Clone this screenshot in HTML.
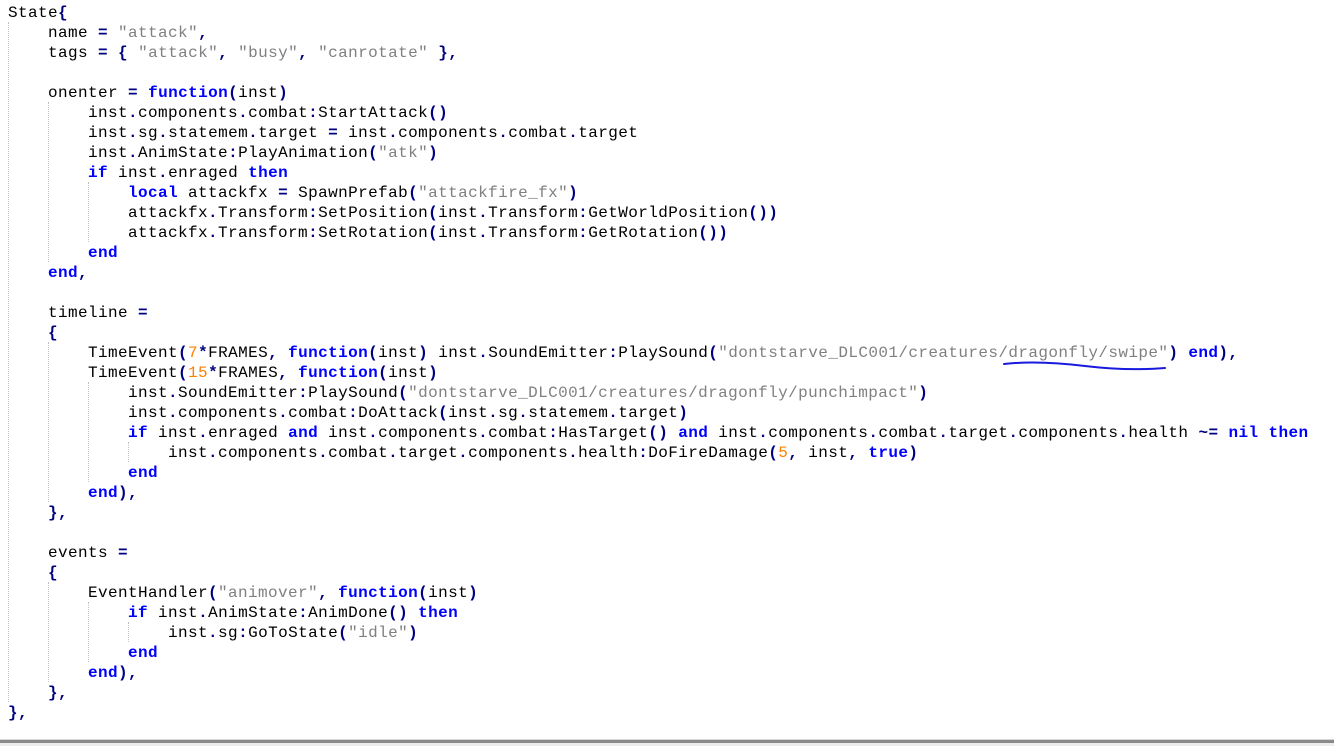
<!DOCTYPE html>
<html><head><meta charset="utf-8"><style>
html,body{margin:0;padding:0;background:#fff;width:1334px;height:746px;overflow:hidden;position:relative}
pre{position:absolute;left:8px;top:3px;margin:0;font-family:"Liberation Mono",monospace;font-size:16px;letter-spacing:0.4px;line-height:20px;color:#000}
.k{color:#0000ff;font-weight:bold}
.o{color:#000080;font-weight:bold}
.s{color:#808080}
.n{color:#ff8000}
.g{position:absolute;width:0;border-left:1px dotted #c0c0c0}
</style></head><body>
<div class="g" style="left:8px;top:22px;height:680px"></div>
<div class="g" style="left:48px;top:102px;height:160px"></div>
<div class="g" style="left:48px;top:342px;height:160px"></div>
<div class="g" style="left:48px;top:582px;height:100px"></div>
<div class="g" style="left:88px;top:182px;height:60px"></div>
<div class="g" style="left:88px;top:382px;height:100px"></div>
<div class="g" style="left:88px;top:602px;height:60px"></div>
<div class="g" style="left:128px;top:442px;height:20px"></div>
<div class="g" style="left:128px;top:622px;height:20px"></div>
<pre>State<span class="o">{</span>
    name <span class="o">=</span> <span class="s">"attack"</span><span class="o">,</span>
    tags <span class="o">=</span> <span class="o">{</span> <span class="s">"attack"</span><span class="o">,</span> <span class="s">"busy"</span><span class="o">,</span> <span class="s">"canrotate"</span> <span class="o">},</span>

    onenter <span class="o">=</span> <span class="k">function</span><span class="o">(</span>inst<span class="o">)</span>
        inst<span class="o">.</span>components<span class="o">.</span>combat<span class="o">:</span>StartAttack<span class="o">()</span>
        inst<span class="o">.</span>sg<span class="o">.</span>statemem<span class="o">.</span>target <span class="o">=</span> inst<span class="o">.</span>components<span class="o">.</span>combat<span class="o">.</span>target
        inst<span class="o">.</span>AnimState<span class="o">:</span>PlayAnimation<span class="o">(</span><span class="s">"atk"</span><span class="o">)</span>
        <span class="k">if</span> inst<span class="o">.</span>enraged <span class="k">then</span>
            <span class="k">local</span> attackfx <span class="o">=</span> SpawnPrefab<span class="o">(</span><span class="s">"attackfire_fx"</span><span class="o">)</span>
            attackfx<span class="o">.</span>Transform<span class="o">:</span>SetPosition<span class="o">(</span>inst<span class="o">.</span>Transform<span class="o">:</span>GetWorldPosition<span class="o">())</span>
            attackfx<span class="o">.</span>Transform<span class="o">:</span>SetRotation<span class="o">(</span>inst<span class="o">.</span>Transform<span class="o">:</span>GetRotation<span class="o">())</span>
        <span class="k">end</span>
    <span class="k">end</span><span class="o">,</span>

    timeline <span class="o">=</span>
    <span class="o">{</span>
        TimeEvent<span class="o">(</span><span class="n">7</span><span class="o">*</span>FRAMES<span class="o">,</span> <span class="k">function</span><span class="o">(</span>inst<span class="o">)</span> inst<span class="o">.</span>SoundEmitter<span class="o">:</span>PlaySound<span class="o">(</span><span class="s">"dontstarve_DLC001/creatures/dragonfly/swipe"</span><span class="o">)</span> <span class="k">end</span><span class="o">),</span>
        TimeEvent<span class="o">(</span><span class="n">15</span><span class="o">*</span>FRAMES<span class="o">,</span> <span class="k">function</span><span class="o">(</span>inst<span class="o">)</span>
            inst<span class="o">.</span>SoundEmitter<span class="o">:</span>PlaySound<span class="o">(</span><span class="s">"dontstarve_DLC001/creatures/dragonfly/punchimpact"</span><span class="o">)</span>
            inst<span class="o">.</span>components<span class="o">.</span>combat<span class="o">:</span>DoAttack<span class="o">(</span>inst<span class="o">.</span>sg<span class="o">.</span>statemem<span class="o">.</span>target<span class="o">)</span>
            <span class="k">if</span> inst<span class="o">.</span>enraged <span class="k">and</span> inst<span class="o">.</span>components<span class="o">.</span>combat<span class="o">:</span>HasTarget<span class="o">()</span> <span class="k">and</span> inst<span class="o">.</span>components<span class="o">.</span>combat<span class="o">.</span>target<span class="o">.</span>components<span class="o">.</span>health <span class="o">~=</span> <span class="k">nil</span> <span class="k">then</span>
                inst<span class="o">.</span>components<span class="o">.</span>combat<span class="o">.</span>target<span class="o">.</span>components<span class="o">.</span>health<span class="o">:</span>DoFireDamage<span class="o">(</span><span class="n">5</span><span class="o">,</span> inst<span class="o">,</span> <span class="k">true</span><span class="o">)</span>
            <span class="k">end</span>
        <span class="k">end</span><span class="o">),</span>
    <span class="o">},</span>

    events <span class="o">=</span>
    <span class="o">{</span>
        EventHandler<span class="o">(</span><span class="s">"animover"</span><span class="o">,</span> <span class="k">function</span><span class="o">(</span>inst<span class="o">)</span>
            <span class="k">if</span> inst<span class="o">.</span>AnimState<span class="o">:</span>AnimDone<span class="o">()</span> <span class="k">then</span>
                inst<span class="o">.</span>sg<span class="o">:</span>GoToState<span class="o">(</span><span class="s">"idle"</span><span class="o">)</span>
            <span class="k">end</span>
        <span class="k">end</span><span class="o">),</span>
    <span class="o">},</span>
<span class="o">},</span></pre>
<svg style="position:absolute;left:0;top:0" width="1334" height="746">
<path d="M1004 364 C1030 361 1060 363 1085 366 C1110 369 1140 370 1165 368" fill="none" stroke="#1a1adf" stroke-width="2" stroke-linecap="round"/>
</svg>
<div style="position:absolute;left:0;top:739px;width:1334px;height:1px;background:#d8d8d8"></div>
<div style="position:absolute;left:0;top:740px;width:1334px;height:3px;background:#8a8a8a"></div>
<div style="position:absolute;left:0;top:743px;width:1334px;height:3px;background:#ececec"></div>
</body></html>
